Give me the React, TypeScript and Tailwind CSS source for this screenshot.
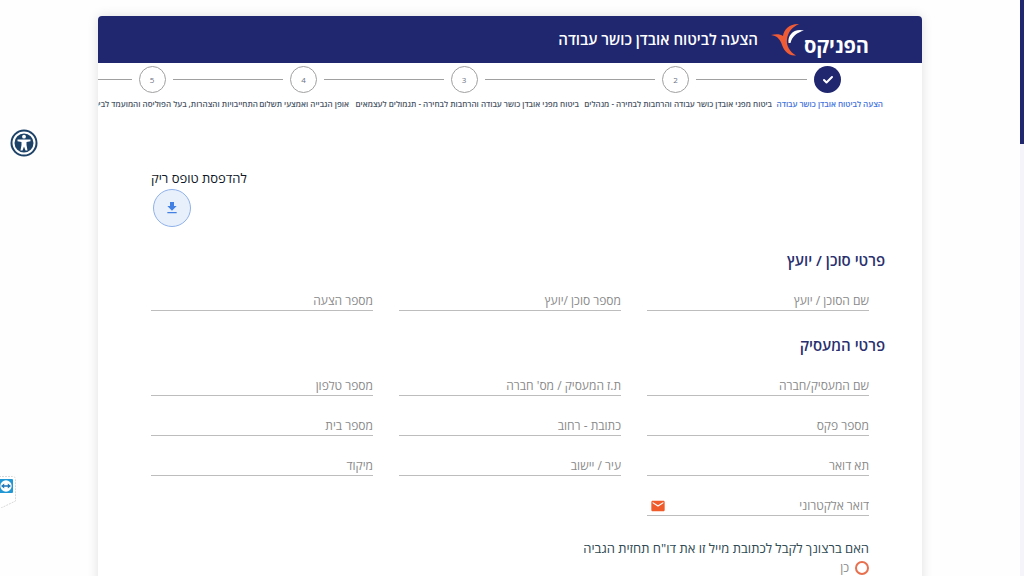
import React from 'react';
import { Check } from 'lucide-react';
import { MdEmail, MdFileDownload } from 'react-icons/md';

type Step = { label: string; width: string };

// Each column is as wide as its label, the circle sits in the middle of it
const steps: Step[] = [
  { label: 'הצעה לביטוח אובדן כושר עבודה', width: 'w-[111px]' },
  { label: 'ביטוח מפני אובדן כושר עבודה והרחבות לבחירה - מנהלים', width: 'w-[193px]' },
  { label: 'ביטוח מפני אובדן כושר עבודה והרחבות לבחירה - תגמולים לעצמאים', width: 'w-[230px]' },
  { label: 'אופן הגבייה ואמצעי תשלום', width: 'w-[91px]' },
  { label: 'התחייבויות והצהרות, בעל הפוליסה והמועמד לביטוח', width: 'w-[212px]' },
];

const agentFields = ['שם הסוכן / יועץ', 'מספר סוכן /יועץ', 'מספר הצעה'];

const employerFields = [
  'שם המעסיק/חברה',
  "ת.ז המעסיק / מס' חברה",
  'מספר טלפון',
  'מספר פקס',
  'כתובת - רחוב',
  'מספר בית',
  'תא דואר',
  'עיר / יישוב',
  'מיקוד',
];

function Logo() {
  return (
    <div className="flex h-full items-center text-white">
      <span className="pt-3 text-xl leading-6 font-bold">הפניקס</span>
      <svg className="h-[34px] w-[34px]" viewBox="0 0 34 34" aria-hidden="true">
        <path
          d="M1 12C6 10.5 10.5 11 13 13C14 6 20 0.5 29 1C22 4 18 9 17 16C16 23 20 29 26 32.5C18 33.5 13.500 27 11.500 20.500C9.500 15.500 7 13 1 12Z"
          fill="#ef5b35"
        />
        <path d="M18.500 20C17.500 12 24 5 34 7.500C27 9.500 22 13.500 20.500 20Z" fill="#fff" />
      </svg>
    </div>
  );
}

function Stepper() {
  return (
    <ol className="flex overflow-hidden pt-[3px] pr-[39px]">
      {steps.map((step, i) => (
        <li key={step.label} className={`flex shrink-0 flex-col ${step.width}`}>
          <div className="flex w-full items-center gap-[7px]">
            <span className={i === 0 ? 'h-px flex-1' : 'h-px flex-1 bg-[#a0a0a0]'} />
            {i === 0 ? (
              <span className="flex h-[27px] w-[27px] items-center justify-center rounded-full bg-[#20276f] text-white">
                <Check size={12} strokeWidth={4} />
              </span>
            ) : (
              <span className="flex h-[27px] w-[27px] items-center justify-center rounded-full border border-[#a0a0a0] text-[8px] text-gray-500">
                {i + 1}
              </span>
            )}
            <span className="h-px flex-1 bg-[#a0a0a0]" />
          </div>
          <span
            className={
              i === 0
                ? 'mt-[3px] text-[8px] leading-4 font-semibold whitespace-nowrap text-[#3f72dc]'
                : 'mt-[3px] text-[8px] leading-4 font-semibold whitespace-nowrap text-gray-600'
            }
          >
            {step.label}
          </span>
        </li>
      ))}
    </ol>
  );
}

function Field({ label, type = 'text', children }: { label: string; type?: string; children?: React.ReactNode }) {
  return (
    <div className="flex h-5 items-center border-b border-[#bdbdbd]">
      <input
        type={type}
        aria-label={label}
        placeholder={label}
        dir="rtl"
        className="w-full min-w-0 flex-1 bg-transparent text-xs leading-4 outline-none placeholder:text-[#8a8a8a]"
      />
      {children}
    </div>
  );
}

function SectionTitle({ children }: { children: React.ReactNode }) {
  return <h2 className="text-[15px] leading-5 font-semibold text-[#2a2f6e]">{children}</h2>;
}

export default function App() {
  return (
    <div
      dir="rtl"
      className="flex h-screen overflow-hidden bg-[#fefefe] font-['Open_Sans','Liberation_Sans',sans-serif]"
    >
      {/* scroll bar */}
      <div className="w-1 shrink-0 bg-[#f4f4fa]">
        <div className="h-1/4 bg-[#20276f]" />
      </div>

      <main className="min-w-0 flex-1 px-[98px] pt-4">
        <div className="min-h-screen rounded-t bg-white shadow-[0_0_12px_rgba(0,0,0,0.12)]">
          <header className="flex h-[47px] items-center gap-3 rounded-t bg-[#20276f] pr-[53px]">
            <Logo />
            <h1 className="pb-0.5 text-[15px] leading-5 font-semibold text-white">הצעה לביטוח אובדן כושר עבודה</h1>
          </header>

          <Stepper />

          <form className="px-[37px] pt-[58px]">
            <div className="flex justify-end pl-4">
              <div className="flex flex-col items-end gap-[3px]">
                <span id="print-label" className="text-[13px] leading-4 text-gray-900">
                  להדפסת טופס ריק
                </span>
                <button
                  type="button"
                  aria-labelledby="print-label"
                  className="ml-0.5 flex h-[38px] w-[38px] items-center justify-center rounded-full border border-[#8fb1ea] bg-[#e8f0fc] text-[#4280e4]"
                >
                  <MdFileDownload size={16} />
                </button>
              </div>
            </div>

            <section className="pt-[23px]">
              <SectionTitle>פרטי סוכן / יועץ</SectionTitle>
              <div className="grid grid-cols-3 gap-x-[26px] gap-y-5 px-4 pt-[21px]">
                {agentFields.map((label) => (
                  <Field key={label} label={label} />
                ))}
              </div>
            </section>

            <section className="pt-6">
              <SectionTitle>פרטי המעסיק</SectionTitle>
              <div className="grid grid-cols-3 gap-x-[26px] gap-y-5 px-4 pt-[21px]">
                {employerFields.map((label) => (
                  <Field key={label} label={label} />
                ))}
                <Field label="דואר אלקטרוני" type="email">
                  <MdEmail size={16} className="ml-[3px] shrink-0 text-[#ef5b2b]" />
                </Field>
              </div>
            </section>

            <div role="radiogroup" aria-labelledby="report-label" className="px-4 pt-6">
              <p id="report-label" className="text-[13px] leading-4 text-[#2f4a52]">
                האם ברצונך לקבל לכתובת מייל זו את דו"ח תחזית הגביה
              </p>
              <label className="flex items-center gap-1.5 pt-1 text-xs leading-4 text-[#8a8a8a]">
                <input
                  type="radio"
                  name="report"
                  className="h-3.5 w-3.5 shrink-0 appearance-none rounded-full border-2 border-[#e8704f] checked:bg-[#e8704f]"
                />
                כן
              </label>
            </div>
          </form>
        </div>
      </main>

      {/* floating widgets */}
      <button type="button" aria-label="נגישות" className="fixed top-[129px] left-2.5">
        <svg className="h-7 w-7" viewBox="0 0 28 28">
          <circle cx="14" cy="14" r="13.5" fill="#1d4268" />
          <circle cx="14" cy="14" r="10.5" fill="#1d4268" stroke="#fff" strokeWidth="2" />
          <circle cx="14" cy="7.7" r="1.9" fill="#fff" />
          <path d="M7.5 10.5H20.5V12.3L16.5 13V16L17.5 21.5H15.5L14 17.5L12.5 21.5H10.5L11.5 16V13L7.5 12.3Z" fill="#fff" />
        </svg>
      </button>
      <div className="fixed top-[476px] left-0 h-8 w-4">
        <svg className="h-8 w-[17px]" viewBox="0 0 17 32" aria-hidden="true">
          <path d="M0 0.5H13.5Q16.5 0.5 16.5 3.5V25L0 33" fill="#fff" stroke="#d8d8d8" strokeDasharray="2 1" />
          <rect x="0" y="3" width="14" height="14" rx="1" fill="#2197d4" />
          <circle cx="7" cy="10" r="5.7" fill="#fff" />
          <path d="M2 10L5.2 7.6V9.2H8.8V7.6L12 10L8.8 12.4V10.8H5.2V12.4Z" fill="#2176b8" />
        </svg>
      </div>
    </div>
  );
}
